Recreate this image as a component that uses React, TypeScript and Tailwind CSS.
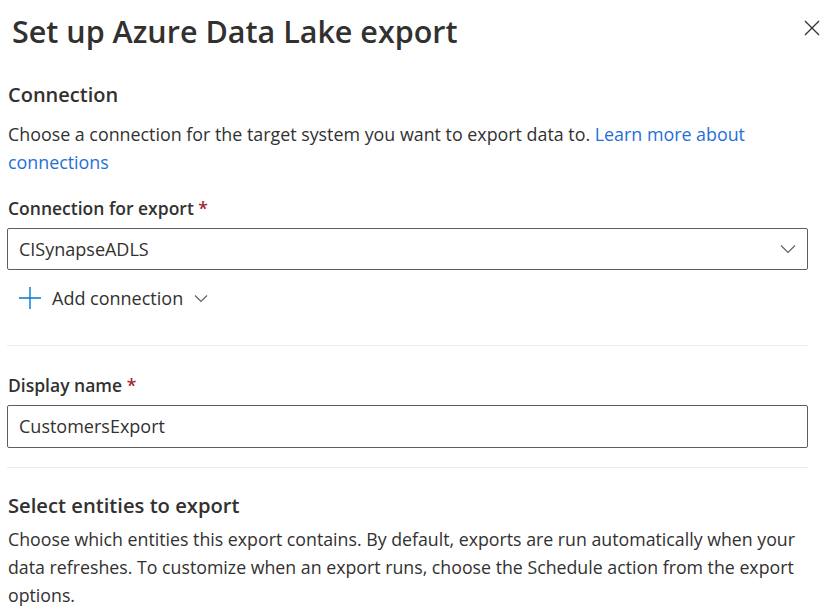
export default function App() {
  return (
    <div
      className="relative w-[826px] h-[610px] overflow-hidden bg-white text-[#323130]"
      style={{ fontFamily: '"Segoe UI", "Open Sans", "Noto Sans", sans-serif' }}
    >
      {/* Header */}
      <div className="flex items-start justify-between pl-[12px] pr-[6px] pt-[11px]">
        <h1 className="h-[40px] text-[30.5px] leading-[40px] font-semibold">
          Set up Azure Data Lake export
        </h1>
        <button className="mt-[9px] w-[16px] h-[16px] text-[#323130]">
          <svg width="16" height="16" viewBox="0 0 16 16" fill="none">
            <path d="M1 1L15 15M15 1L1 15" stroke="currentColor" strokeWidth="1.3" />
          </svg>
        </button>
      </div>

      <div className="px-[7px] w-[815px]">
        {/* Connection */}
        <h2 className="mt-[30px] pl-[1px] text-[20px] leading-[28px] font-semibold">Connection</h2>
        <p className="mt-[11px] pl-[1px] text-[17.85px] leading-[28px]">
          Choose a connection for the target system you want to export data to.{" "}
          <span className="text-[#1f6fd8]">Learn more about connections</span>
        </p>

        <label className="block mt-[20px] pl-[1px] text-[17.5px] leading-[24px] font-semibold">
          Connection for export <span className="text-[#a4262c]">*</span>
        </label>
        <div className="mt-[8px] h-[42px] flex items-center justify-between rounded-[2px] border border-[#605e5c] pl-[11px] pr-[11px]">
          <span className="text-[18px]">CISynapseADLS</span>
          <svg width="16" height="10" viewBox="0 0 16 10" fill="none">
            <path d="M1 1.5L8 8.5L15 1.5" stroke="#605e5c" strokeWidth="1.1" />
          </svg>
        </div>

        <div className="mt-[12px] h-[32px] flex items-center pl-[12px]">
          <svg width="22" height="22" viewBox="0 0 22 22" fill="none">
            <path d="M11 0V22M0 11H22" stroke="#0078d4" strokeWidth="1.4" />
          </svg>
          <span className="ml-[11px] text-[18px]">Add connection</span>
          <svg className="ml-[11px]" width="14" height="9" viewBox="0 0 14 9" fill="none">
            <path d="M1 1.5L7 7.5L13 1.5" stroke="#605e5c" strokeWidth="1.1" />
          </svg>
        </div>

        <div className="mt-[31px] h-px bg-[#edebe9]" />

        {/* Display name */}
        <label className="block mt-[27px] pl-[1px] text-[17.5px] leading-[24px] font-semibold">
          Display name <span className="text-[#a4262c]">*</span>
        </label>
        <div className="mt-[8px] h-[43px] flex items-center rounded-[2px] border border-[#605e5c] pl-[11px]">
          <span className="text-[18px]">CustomersExport</span>
        </div>

        <div className="mt-[19px] h-px bg-[#edebe9]" />

        {/* Entities */}
        <h2 className="mt-[22px] pl-[1px] text-[20.2px] leading-[30px] font-semibold">
          Select entities to export
        </h2>
        <p className="mt-[5px] pl-[1px] text-[17.75px] leading-[28px]">
          Choose which entities this export contains. By default, exports are run automatically when your
          data refreshes. To customize when an export runs, choose the Schedule action from the export
          options.
        </p>
      </div>
    </div>
  );
}
